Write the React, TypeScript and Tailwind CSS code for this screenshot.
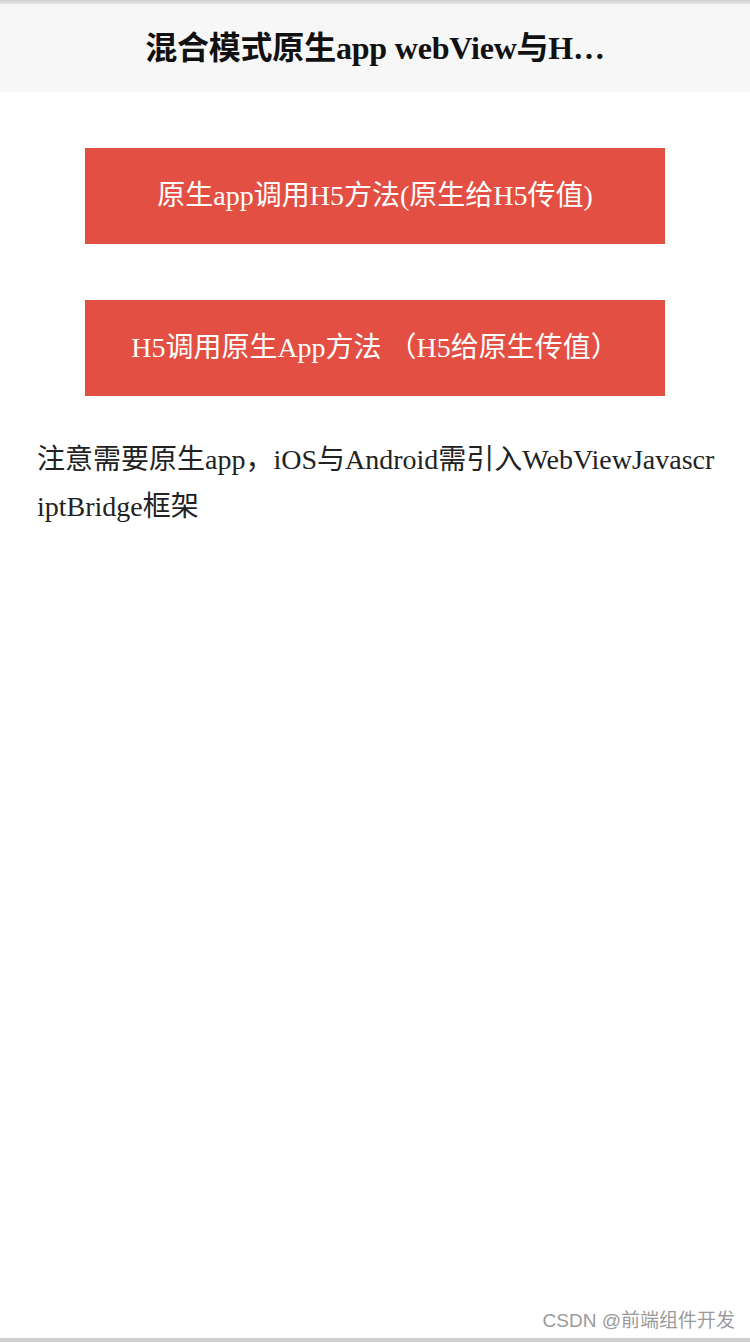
import React from "react";

const serif = "font-['Liberation_Serif','Noto_Sans_CJK_SC',serif]";

export default function App() {
  return (
    <div className={`relative w-[750px] h-[1342px] bg-white overflow-hidden ${serif}`}>
      {/* top shadow strip */}
      <div className="h-[4px] bg-gradient-to-b from-[#cfcfcf] to-[#e6e6e6]" />
      {/* header */}
      <div className="h-[88px] bg-[#f7f7f7] flex items-center justify-center">
        <h1 className="text-[32px] font-bold text-[#111] tracking-[-0.2px]">混合模式原生app webView与H…</h1>
      </div>

      <div className="flex flex-col items-center pt-[56px] gap-[56px]">
        <button className="w-[580px] h-[96px] bg-[#e44f44] text-white text-[28px] flex items-center justify-center">
          原生app调用H5方法(原生给H5传值)
        </button>
        <button className="w-[580px] h-[96px] bg-[#e44f44] text-white text-[28px] flex items-center justify-center whitespace-pre">
          H5调用原生App方法 （H5给原生传值）
        </button>
      </div>

      <p className="pl-[37px] pr-[33px] pt-[40px] text-[28px] leading-[47px] text-[#222] break-all">
        注意需要原生app，iOS与Android需引入WebViewJavascriptBridge框架
      </p>

      {/* watermark */}
      <div className="absolute right-[15px] bottom-[7px] text-[19px] text-[#9a9a9a] font-['Liberation_Sans','Noto_Sans_CJK_SC',sans-serif]">
        CSDN @前端组件开发
      </div>
      <div className="absolute left-0 right-0 bottom-0 h-[4px] bg-[#cfcfcf]" />
    </div>
  );
}
